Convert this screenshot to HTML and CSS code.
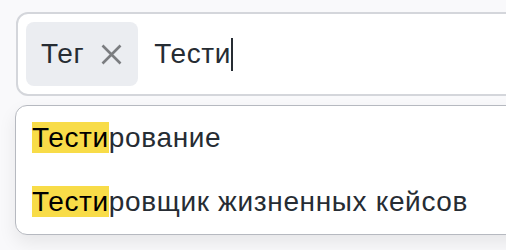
FILE: index.html
```html
<!DOCTYPE html>
<html lang="ru">
<head>
    <meta charset="UTF-8">
    <meta name="viewport" content="width=device-width, initial-scale=1.0">
    <title>Tag input</title>
    <link rel="stylesheet" href="styles.css">
</head>
<body>
    <div class="field">
        <div class="tag">
            <span class="tag-label">Тег</span>
            <svg class="tag-remove" width="21" height="21" viewBox="0 0 21 21">
                <path d="M1.5 1.5 L19.5 19.5 M19.5 1.5 L1.5 19.5" stroke="#7b7d80" stroke-width="2.6" fill="none"/>
            </svg>
        </div>
        <span class="query">Тести</span><span class="caret"></span>
    </div>
    <div class="suggestions">
        <div class="option"><mark>Тести</mark>рование</div>
        <div class="option"><mark>Тести</mark>ровщик жизненных кейсов</div>
    </div>
</body>
</html>
```

FILE: styles.css
```css
body {
    margin: 0;
    padding: 12px 0 0 16px;
    background-color: #f9f9fb;
    font-family: "Liberation Sans", Arial, sans-serif;
    font-size: 28px;
    letter-spacing: 0.65px;
    color: #262c33;
    overflow: hidden;
    height: 250px;
    box-sizing: border-box;
}
.field {
    width: 520px;
    display: flex;
    align-items: center;
    padding: 8px;
    background-color: #fff;
    border: 2px solid #d4d6db;
    border-radius: 12px;
}
.tag {
    display: flex;
    align-items: center;
    gap: 17px;
    height: 64px;
    padding: 0 16px 0 15px;
    background-color: #ebedf1;
    border-radius: 8px;
}
.tag-label {
    line-height: 32px;
}
.tag-remove {
    display: block;
}
.query {
    margin-left: 16px;
    line-height: 32px;
}
.caret {
    display: inline-block;
    width: 2px;
    height: 33px;
    background-color: #262c33;
}
.suggestions {
    width: 520px;
    margin: 9px 0 0 -1px;
    background-color: #fff;
    border: 1px solid #b6b9c0;
    border-radius: 12px;
    box-shadow: 0 8px 18px rgba(0, 0, 0, 0.08);
}
.option {
    padding: 16px;
    line-height: 32px;
}
mark {
    background-color: #f8dc48;
    color: #000;
}
```
